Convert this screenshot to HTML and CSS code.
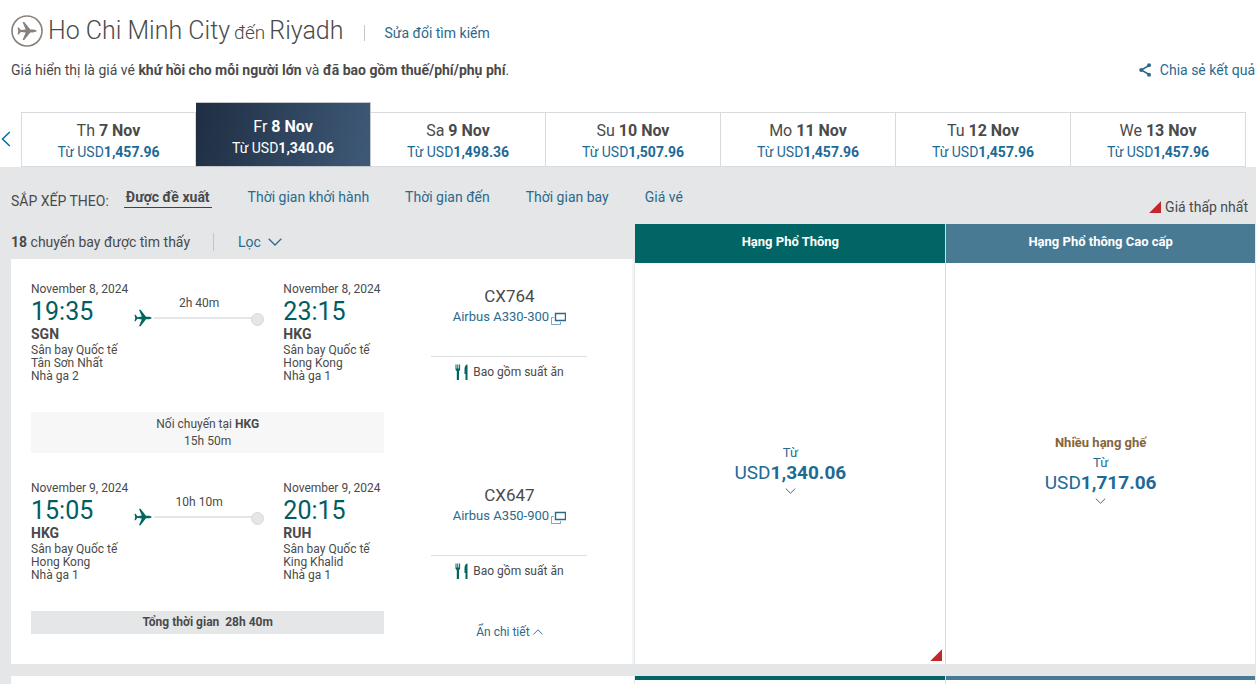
FILE: index.html
```html
<!DOCTYPE html>
<html lang="vi">
<head>
<meta charset="utf-8">
<meta name="viewport" content="width=device-width, initial-scale=1">
<title>Ho Chi Minh City đến Riyadh</title>
<link rel="stylesheet" href="styles.css">
</head>
<body>
<svg class="sprite" aria-hidden="true">
  <symbol id="plane" viewBox="0 0 18 18"><path d="M18 9C17 8.200 15.500 7.700 14 7.700H12L6.500.8H5L7.800 7.600L3.500 8.200L1.500 5.800H.5L1.200 9L.5 12.200H1.500L3.500 9.800L7.800 10.400L5 17.200H6.500L12 10.300H14C15.500 10.300 17 9.800 18 9Z" fill="currentColor"/></symbol>
  <symbol id="chevron" viewBox="0 0 14 8"><path d="M.7.8 7 7 13.300.8" fill="none" stroke="currentColor" stroke-width="1.300"/></symbol>
  <symbol id="popup" viewBox="0 0 15 13"><path d="M4.500 1.500h10v7h-10z" fill="none" stroke="currentColor" stroke-width="1.400"/><path d="M3 5.500H.5v7h9V10" fill="none" stroke="currentColor" opacity=".6"/></symbol>
  <symbol id="meal" viewBox="0 0 14 17"><path d="M.5.500h1v4h.8v-4h1v4h.8v-4h1v5.300L4 7.200V16H1.800V7.200L.5 5.800Z" fill="currentColor"/><path d="M12.500.5V16h-2V10H9.500V5C9.500 2.500 10.800.5 12.500.5Z" fill="currentColor"/></symbol>
</svg>

<header class="page-head">
  <div class="route">
    <svg class="route-icon" viewBox="0 0 32 32" aria-hidden="true"><circle cx="16" cy="16" r="15" fill="none" stroke="currentColor" stroke-width="1.600"/><use href="#plane" x="6" y="6" width="20" height="20"/></svg>
    <h1 class="route-title"><span>Ho Chi Minh City</span> <span class="route-to">đến</span> <span>Riyadh</span></h1>
    <a class="edit-link" href="#">Sửa đổi tìm kiếm</a>
  </div>
  <div class="note-row">
    <p class="note">Giá hiển thị là giá vé <b>khứ hồi cho mỗi người lớn</b> và <b>đã bao gồm thuế/phí/phụ phí</b>.</p>
    <a class="share" href="#">
      <svg class="share-icon" viewBox="0 0 12 14" aria-hidden="true"><path d="M10 2.500 2.300 7 10 11.500" fill="none" stroke="currentColor" stroke-width="1.500"/><g fill="currentColor"><circle cx="10" cy="2.300" r="2"/><circle cx="2.200" cy="7" r="2"/><circle cx="10" cy="11.700" r="2"/></g></svg>
      Chia sẻ kết quả
    </a>
  </div>
</header>

<nav class="calendar" aria-label="Ngày bay">
  <button class="cal-prev" type="button" aria-label="Ngày trước"><svg viewBox="0 0 10 16" aria-hidden="true"><path d="M9.300 1 2 8l7.300 7" fill="none" stroke="currentColor" stroke-width="1.500"/></svg></button>
  <div class="days">
    <button class="day" type="button"><span class="day-date">Th <b>7 Nov</b></span><span class="day-fare">Từ USD<b>1,457.96</b></span></button>
    <button class="day day-active" type="button"><span class="day-date">Fr <b>8 Nov</b></span><span class="day-fare">Từ USD<b>1,340.06</b></span></button>
    <button class="day" type="button"><span class="day-date">Sa <b>9 Nov</b></span><span class="day-fare">Từ USD<b>1,498.36</b></span></button>
    <button class="day" type="button"><span class="day-date">Su <b>10 Nov</b></span><span class="day-fare">Từ USD<b>1,507.96</b></span></button>
    <button class="day" type="button"><span class="day-date">Mo <b>11 Nov</b></span><span class="day-fare">Từ USD<b>1,457.96</b></span></button>
    <button class="day" type="button"><span class="day-date">Tu <b>12 Nov</b></span><span class="day-fare">Từ USD<b>1,457.96</b></span></button>
    <button class="day" type="button"><span class="day-date">We <b>13 Nov</b></span><span class="day-fare">Từ USD<b>1,457.96</b></span></button>
  </div>
</nav>

<main class="results">
  <div class="sort-row">
    <span class="sort-label">SẮP XẾP THEO:</span>
    <div class="sort-options">
      <button class="sort sort-active" type="button">Được đề xuất</button>
      <button class="sort" type="button">Thời gian khởi hành</button>
      <button class="sort" type="button">Thời gian đến</button>
      <button class="sort" type="button">Thời gian bay</button>
      <button class="sort" type="button">Giá vé</button>
    </div>
    <span class="lowest"><i class="corner"></i>Giá thấp nhất</span>
  </div>

  <section class="offer">
    <div class="flight">
      <div class="filter-row">
        <span class="count"><b>18</b> chuyến bay được tìm thấy</span>
        <button class="filter" type="button">Lọc <svg class="filter-icon" aria-hidden="true"><use href="#chevron"/></svg></button>
      </div>
      <div class="card">
        <article class="leg">
          <div class="trip">
            <div class="stop"><span class="date">November 8, 2024</span><span class="time">19:35</span><b class="code">SGN</b><span class="place">Sân bay Quốc tế<br>Tân Sơn Nhất<br>Nhà ga 2</span></div>
            <div class="path"><span>2h 40m</span><div class="track"><svg class="track-plane" aria-hidden="true"><use href="#plane"/></svg></div></div>
            <div class="stop"><span class="date">November 8, 2024</span><span class="time">23:15</span><b class="code">HKG</b><span class="place">Sân bay Quốc tế<br>Hong Kong<br>Nhà ga 1</span></div>
          </div>
          <div class="info">
            <span class="number">CX764</span>
            <a class="aircraft" href="#">Airbus A330-300 <svg class="popup" aria-hidden="true"><use href="#popup"/></svg></a>
            <span class="meal"><svg class="meal-icon" aria-hidden="true"><use href="#meal"/></svg>Bao gồm suất ăn</span>
          </div>
        </article>
        <div class="connection">
          <div class="layover">Nối chuyến tại <b>HKG</b><br>15h 50m</div>
        </div>
        <article class="leg">
          <div class="trip">
            <div class="stop"><span class="date">November 9, 2024</span><span class="time">15:05</span><b class="code">HKG</b><span class="place">Sân bay Quốc tế<br>Hong Kong<br>Nhà ga 1</span></div>
            <div class="path"><span>10h 10m</span><div class="track"><svg class="track-plane" aria-hidden="true"><use href="#plane"/></svg></div></div>
            <div class="stop"><span class="date">November 9, 2024</span><span class="time">20:15</span><b class="code">RUH</b><span class="place">Sân bay Quốc tế<br>King Khalid<br>Nhà ga 1</span></div>
          </div>
          <div class="info">
            <span class="number">CX647</span>
            <a class="aircraft" href="#">Airbus A350-900 <svg class="popup" aria-hidden="true"><use href="#popup"/></svg></a>
            <span class="meal"><svg class="meal-icon" aria-hidden="true"><use href="#meal"/></svg>Bao gồm suất ăn</span>
          </div>
        </article>
        <div class="summary">
          <div class="total">Tổng thời gian&nbsp; 28h 40m</div>
          <button class="toggle" type="button">Ẩn chi tiết <svg class="toggle-icon" aria-hidden="true"><use href="#chevron"/></svg></button>
        </div>
      </div>
    </div>
    <div class="cabin economy">
      <h2 class="cabin-name">Hạng Phổ Thông</h2>
      <button class="fare" type="button"><span class="from">Từ</span><span class="amount">USD<b>1,340.06</b></span><svg class="fare-icon" aria-hidden="true"><use href="#chevron"/></svg></button>
      <i class="corner corner-fare"></i>
    </div>
    <div class="cabin premium">
      <h2 class="cabin-name">Hạng Phổ thông Cao cấp</h2>
      <button class="fare" type="button"><b class="mixed">Nhiều hạng ghế</b><span class="from">Từ</span><span class="amount">USD<b>1,717.06</b></span><svg class="fare-icon" aria-hidden="true"><use href="#chevron"/></svg></button>
    </div>
  </section>

  <section class="offer offer-next">
    <div class="flight"></div>
    <div class="cabin economy"></div>
    <div class="cabin premium"></div>
  </section>
</main>
</body>
</html>
```
FILE: styles.css
```css
* { box-sizing: border-box; }
body {
  margin: 0;
  background: #fff;
  color: #4a4a4a;
  font: 14px/20px Roboto, "Liberation Sans", sans-serif;
}
.sprite { display: none; }
svg { display: block; flex: none; }
a, button { color: #2b6a8c; text-decoration: none; }
button { border: 0; padding: 0; background: none; font: inherit; cursor: pointer; }
b { font-weight: 700; }
h1, h2, p { margin: 0; }

.page-head { padding: 12px 1px 0 11px; }
.route { display: flex; align-items: center; height: 36px; }
.route-icon { width: 32px; height: 32px; margin-top: 2px; margin-right: 5px; color: #87817a; }
.route-title { display: flex; align-items: baseline; gap: 4px; margin-top: 4px; font-size: 25px; font-weight: 300; line-height: 32px; }
.route-to { font-size: 19px; }
.edit-link { margin-top: 6px; margin-left: 21px; border-left: 1px solid #c3c5c6; padding-left: 19px; line-height: 16px; }
.note-row { display: flex; justify-content: space-between; align-items: center; padding-top: 12px; }
.share { display: flex; align-items: center; gap: 9px; }
.share-icon { width: 12px; height: 14px; }

.calendar { display: flex; align-items: flex-end; padding: 22px 10px 0 0; }
.cal-prev { width: 21px; height: 55px; padding-bottom: 2px; color: #00709a; }
.cal-prev svg { width: 11px; height: 16px; }
.days { flex: 1; display: grid; grid-template-columns: repeat(7, 1fr); align-items: end; }
.day { display: flex; flex-direction: column; align-items: center; padding: 7px 0 4px; border: 1px solid #d8dadb; border-left-width: 0; background: #fff; }
.day:first-child { border-left-width: 1px; }
.day-date { font-size: 16px; line-height: 22px; color: #4a4a4a; }
.day-fare { line-height: 20px; color: #1d6a96; }
.day-active { padding: 13px 0 8px; border-color: #c3c8ce; background: linear-gradient(100deg, #1f2e42, #3e5977); }
.day-active .day-date, .day-active .day-fare { color: #fff; }

.results { padding-left: 11px; background: #e4e6e8; }
.sort-row { display: flex; height: 57px; padding: 20px 8px 0 0; }
.sort-label { margin-top: 4px; margin-right: 15px; }
.sort-options { display: flex; align-items: flex-start; gap: 36px; }
.sort-active { border-bottom: 1px solid #005d63; padding: 0 2px; color: #4a4a4a; font-weight: 700; }
.lowest { display: flex; align-items: center; gap: 4px; height: 20px; margin-top: 10px; margin-left: auto; }
.corner { display: block; width: 12px; height: 12px; background: #c1272d; clip-path: polygon(100% 0, 100% 100%, 0 100%); }

.offer { display: grid; grid-template-columns: 624fr 310fr 309fr; gap: 1px; padding-right: 1px; }
.flight { display: flex; flex-direction: column; }
.filter-row { display: flex; align-items: center; height: 35px; }
.filter { display: flex; align-items: center; gap: 7px; margin-left: 23px; border-left: 1px solid #c3c5c6; padding-left: 24px; line-height: 18px; }
.filter-icon { width: 14px; height: 8px; }
.card { flex: 1; padding: 20px 45px 22px 20px; border-right: 2px solid #f4f5f6; background: #fff; font-size: 12px; }
.leg, .connection, .summary { display: grid; grid-template-columns: 353fr 156fr; column-gap: 47px; }
.trip { display: grid; grid-template-columns: 103px 1fr 101px; }
.stop { display: flex; flex-direction: column; white-space: nowrap; }
.date { line-height: 20px; }
.time { color: #005d63; font-size: 25px; line-height: 25px; }
.code { font-size: 14px; line-height: 20px; }
.place { line-height: 13px; }
.path { padding: 14px 19px 0 0; text-align: center; }
.track { position: relative; height: 11px; }
.track::before { content: ""; position: absolute; left: 20px; right: 11px; top: 4px; height: 2px; background: #e4e6e8; }
.track::after { content: ""; position: absolute; right: 0; top: 0; width: 11px; height: 11px; border: 1px solid #d6d8da; border-radius: 50%; background: #e4e6e8; }
.track-plane { position: absolute; left: 0; top: -4px; width: 18px; height: 18px; color: #00665f; }
.info { display: flex; flex-direction: column; align-items: center; padding-top: 6px; }
.number { font-size: 17px; line-height: 22px; }
.aircraft { display: flex; align-items: center; gap: 2px; font-size: 13px; }
.popup { width: 15px; height: 13px; margin-top: 3px; }
.meal { display: flex; align-items: center; justify-content: center; gap: 4px; width: 100%; margin-top: 29px; border-top: 1px solid #dcdee0; padding-top: 5px; }
.meal-icon { width: 14px; height: 17px; color: #00665f; }
.layover { margin: 29px 0 25px; padding: 4px 0 3px; background: #f7f7f7; text-align: center; line-height: 17px; }
.summary { margin-top: 29px; align-items: start; }
.total { background: #e4e6e8; text-align: center; font-weight: 700; line-height: 23px; }
.toggle { display: flex; align-items: center; justify-content: center; gap: 3px; margin-top: 11px; }
.toggle-icon { width: 10px; height: 6px; transform: rotate(180deg); }

.cabin { position: relative; display: flex; flex-direction: column; background: #fff; }
.cabin-name { color: #fff; text-align: center; font-size: 13px; font-weight: 700; line-height: 20px; padding: 8px 0 11px; }
.economy .cabin-name { background: #006564; }
.premium .cabin-name { background: #487a93; }
.premium { box-shadow: -1px 0 #d8dadb; }
.fare { flex: 1; display: flex; flex-direction: column; align-items: center; justify-content: center; padding-top: 10px; }
.mixed { color: #85653a; font-size: 13px; line-height: 20px; }
.from { font-size: 13px; line-height: 20px; }
.amount { font-size: 19px; line-height: 20px; color: #1d6a96; }
.fare-icon { width: 11px; height: 6px; margin-top: 5px; }
.corner-fare { position: absolute; right: 3px; bottom: 3px; }

.offer-next { margin-top: 12px; min-height: 8px; }
.offer-next .flight { background: #fff; }
.offer-next .economy { border-top: 4px solid #006564; }
.offer-next .premium { border-top: 4px solid #487a93; }
```
